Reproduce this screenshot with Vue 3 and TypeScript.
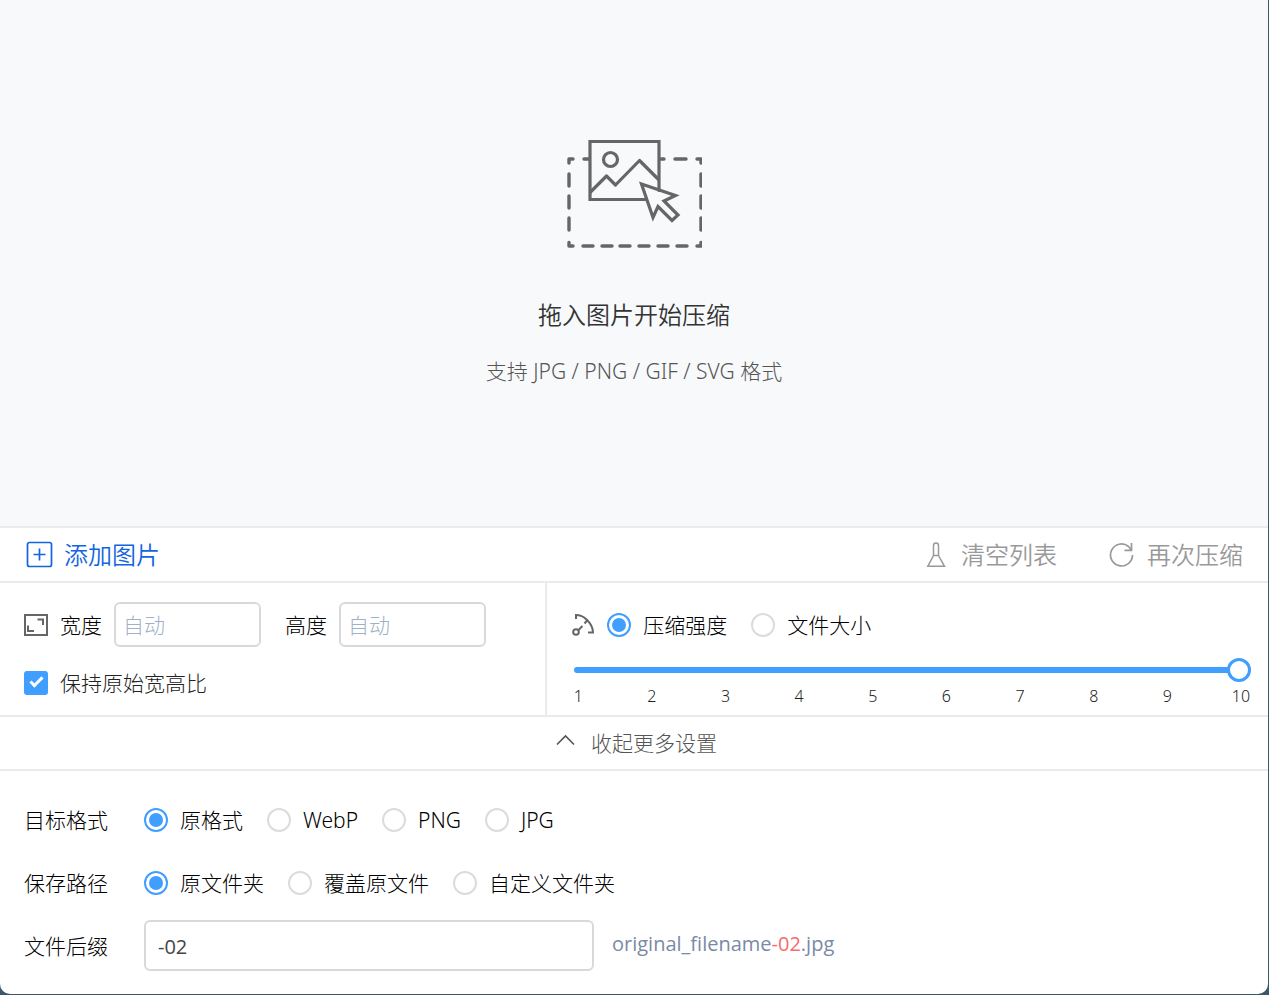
<script setup lang="ts">
import { computed, ref } from 'vue'

interface Option {
  value: string
  label: string
}

const width = ref('')
const height = ref('')
const keepRatio = ref(true)
const mode = ref('strength')
const strength = ref(10)
const expanded = ref(true)
const format = ref('original')
const folder = ref('original')
const suffix = ref('-02')

const modes: Option[] = [
  { value: 'strength', label: '压缩强度' },
  { value: 'size', label: '文件大小' },
]
const formats: Option[] = [
  { value: 'original', label: '原格式' },
  { value: 'webp', label: 'WebP' },
  { value: 'png', label: 'PNG' },
  { value: 'jpg', label: 'JPG' },
]
const folders: Option[] = [
  { value: 'original', label: '原文件夹' },
  { value: 'overwrite', label: '覆盖原文件' },
  { value: 'custom', label: '自定义文件夹' },
]

const ratio = computed(() => (strength.value - 1) / 9)
</script>

<template>
  <div class="window">
    <main class="drop">
      <svg class="drop-icon" viewBox="0 0 136 110" fill="none" stroke="#666" stroke-linecap="round" stroke-linejoin="round">
        <g stroke-width="3.4">
          <path d="M3 24V20H7M18 20H23M95 20H98M109 20H120M131 20H135V24" />
          <path d="M3 35V47M3 57V69M3 79V91M135 35V47M135 57V69M135 79V91" />
          <path d="M3 103.500V107H7M17 107H27M36 107H46M54 107H64M73 107H83M92 107H102M111 107H121M131 107H135V103.500" />
        </g>
        <g stroke-width="3.200">
          <path d="M79 60.500H24V2.500H93V51.500" stroke-linejoin="miter" />
          <circle cx="44.500" cy="20.500" r="7" />
          <path d="M24.500 53 40.500 37 49.500 46 73.500 21.500 92.500 40.500" />
          <path d="M75.500 45 109.500 56.500 98 62 112 76 106 81.500 92 67.500 87 78.500Z" stroke-linejoin="miter" />
        </g>
      </svg>
      <h1>拖入图片开始压缩</h1>
      <p>支持 JPG / PNG / GIF / SVG 格式</p>
    </main>

    <div class="toolbar">
      <button type="button" class="tool add">
        <svg class="add-icon" viewBox="0 0 27 27" fill="none" stroke="currentColor" stroke-width="1.700">
          <rect x="1.500" y="1.500" width="24" height="24" rx="2" />
          <path d="M13.500 7.500V19.500M7.500 13.500H19.500" />
        </svg>
        添加图片
      </button>
      <div class="tools">
        <button type="button" class="tool">
          <svg class="brush-icon" viewBox="0 0 20 26" fill="none" stroke="currentColor" stroke-width="1.500">
            <path d="M7.500 13.500V3.500Q7.500 1 10 1T12.500 3.500V13.500ZM7.500 13.500 1.800 24.300H18.500L12.500 13.500" />
          </svg>
          清空列表
        </button>
        <button type="button" class="tool">
          <svg class="again-icon" viewBox="0 0 26 26" fill="none" stroke="currentColor" stroke-width="1.700">
            <path d="M23.500 13A11 11 0 1 1 19.500 4.500L22 7.500M22.500 1V8.300H15.500" />
          </svg>
          再次压缩
        </button>
      </div>
    </div>

    <div class="settings">
      <section class="resize">
        <div class="sizes">
          <svg class="size-icon" viewBox="0 0 24 22" fill="none" stroke="#666" stroke-width="2">
            <rect x="1" y="1" width="22" height="20" />
            <path d="M13.500 5.500H19V11M4 11.500V17H10" />
          </svg>
          <label for="width">宽度</label>
          <input id="width" v-model="width" class="text size" type="text" placeholder="自动" />
          <label for="height" class="next">高度</label>
          <input id="height" v-model="height" class="text size" type="text" placeholder="自动" />
        </div>
        <label class="check">
          <input v-model="keepRatio" type="checkbox" />
          保持原始宽高比
        </label>
      </section>

      <section class="compress">
        <div class="modes">
          <svg class="gauge-icon" viewBox="0 0 23 24" fill="none" stroke="#666" stroke-width="2">
            <path d="M4 6V2Q10 2 14.500 6.500Q21 12.500 21 19.500H16M16 6.500 12.500 10.500M10.500 13 6.500 17" />
            <circle cx="4" cy="19" r="2.800" />
          </svg>
          <label v-for="item in modes" :key="item.value" class="choice">
            <input v-model="mode" type="radio" name="mode" :value="item.value" />
            {{ item.label }}
          </label>
        </div>
        <input
          v-model.number="strength"
          class="slider"
          type="range"
          min="1"
          max="10"
          aria-label="压缩强度"
          :style="{ '--ratio': ratio }"
        />
        <div class="scale">
          <span v-for="n in 10" :key="n">{{ n }}</span>
        </div>
      </section>
    </div>

    <button type="button" class="toggle" :aria-expanded="expanded" @click="expanded = !expanded">
      <svg class="chevron" :class="{ down: !expanded }" viewBox="0 0 24 24" fill="none" stroke="currentColor" stroke-width="1.600">
        <path d="M6 13.500 14.500 5 23 13.500" />
      </svg>
      收起更多设置
    </button>

    <section v-if="expanded" class="more">
      <div class="row" role="radiogroup" aria-label="目标格式">
        <span class="name">目标格式</span>
        <label v-for="item in formats" :key="item.value" class="choice">
          <input v-model="format" type="radio" name="format" :value="item.value" />
          {{ item.label }}
        </label>
      </div>
      <div class="row" role="radiogroup" aria-label="保存路径">
        <span class="name">保存路径</span>
        <label v-for="item in folders" :key="item.value" class="choice">
          <input v-model="folder" type="radio" name="folder" :value="item.value" />
          {{ item.label }}
        </label>
      </div>
      <div class="row">
        <label class="name" for="suffix">文件后缀</label>
        <input id="suffix" v-model="suffix" class="text suffix" type="text" />
        <span class="preview">original_filename<em>{{ suffix }}</em>.jpg</span>
      </div>
    </section>
  </div>
</template>

<style>
body {
  background: #3b586b;
}
</style>

<style scoped>
.window,
.window * {
  box-sizing: border-box;
}

.window {
  display: flex;
  flex-direction: column;
  min-height: calc(100vh - 1px);
  margin: 0 1px 1px 0;
  overflow: hidden;
  border-radius: 0 0 10px 10px;
  background: #fff;
  color: #000;
  font: 300 21px/32px "Noto Sans", "Noto Sans CJK SC", sans-serif;
}

button,
input {
  margin: 0;
  font: inherit;
}

button {
  padding: 0;
  border: 0;
  background: none;
  cursor: pointer;
}

svg {
  flex: none;
}

.drop {
  display: flex;
  flex: 1;
  flex-direction: column;
  align-items: center;
  justify-content: center;
  background: #f8f9fb;
}

.drop-icon {
  width: 136px;
  height: 110px;
}

h1 {
  margin: 48px 0 22px;
  color: #333;
  font-size: 24px;
  font-weight: 350;
  line-height: 36px;
}

p {
  margin: 0;
  color: #555;
}

.toolbar {
  display: flex;
  align-items: center;
  justify-content: space-between;
  height: 55px;
  padding: 0 25px 0 26px;
  border-top: 2px solid #ebebeb;
}

.tools {
  display: flex;
  gap: 52px;
}

.tool {
  display: flex;
  align-items: center;
  color: #999;
  font-size: 24px;
  font-weight: 350;
}

.tool.add {
  color: #1364e0;
}

.add-icon {
  width: 27px;
  height: 27px;
  margin-right: 11px;
}

.brush-icon {
  width: 20px;
  height: 26px;
  margin-right: 15px;
}

.again-icon {
  width: 26px;
  height: 26px;
  margin-right: 12px;
}

.settings {
  display: grid;
  grid-template-columns: 43fr 57fr;
  border-top: 2px solid #ebebeb;
  border-bottom: 2px solid #ebebeb;
}

.resize {
  padding: 19px 24px 16px;
}

.sizes {
  display: flex;
  align-items: center;
  gap: 12px;
  margin-bottom: 20px;
}

.size-icon {
  width: 24px;
  height: 22px;
}

.next {
  margin-left: 12px;
}

.text {
  min-width: 0;
  border: 2px solid #d9d9d9;
  border-radius: 6px;
  outline: none;
  background: #fff;
  color: #444;
}

.text::placeholder {
  color: #9fb0c8;
  opacity: 1;
}

.size {
  width: 147px;
  height: 45px;
  padding: 0 7px;
}

.check,
.choice {
  display: flex;
  align-items: center;
  gap: 12px;
}

.check {
  color: #222;
}

.check input {
  display: grid;
  place-items: center;
  width: 24px;
  height: 24px;
  border: 2px solid #d9d9d9;
  border-radius: 3px;
  appearance: none;
}

.check input:checked {
  border-color: #409eff;
  background: #409eff;
}

.check input:checked::before {
  width: 10px;
  height: 4px;
  margin-bottom: 5px;
  border: solid #fff;
  border-width: 0 0 3px 3px;
  content: "";
  transform: rotate(-45deg);
}

.choice {
  margin-right: 24px;
}

.choice input {
  display: grid;
  place-items: center;
  width: 24px;
  height: 24px;
  border: 2px solid #dcdcdc;
  border-radius: 50%;
  appearance: none;
}

.choice input:checked {
  border-color: #409eff;
}

.choice input:checked::before {
  width: 14px;
  height: 14px;
  border-radius: 50%;
  background: #409eff;
  content: "";
}

.compress {
  padding: 26px 17px 8px 25px;
  border-left: 2px solid #ebebeb;
}

.modes {
  display: flex;
  align-items: center;
}

.gauge-icon {
  width: 23px;
  height: 24px;
  margin-right: 12px;
}

.slider {
  --fill: calc(12px + (100% - 24px) * var(--ratio));
  display: block;
  width: calc(100% - 2px);
  height: 24px;
  margin: 17px 0 0 2px;
  appearance: none;
  background: none;
}

.slider::-webkit-slider-runnable-track {
  height: 6px;
  border-radius: 3px;
  background: linear-gradient(to right, #409eff var(--fill), #e4e7ed var(--fill));
}

.slider::-webkit-slider-thumb {
  width: 24px;
  height: 24px;
  margin-top: -9px;
  border: 3px solid #409eff;
  border-radius: 50%;
  appearance: none;
  background: #fff;
}

.scale {
  display: flex;
  justify-content: space-between;
  margin: 3px 0 0 -4px;
  color: #222;
  font-size: 16px;
  line-height: 22px;
}

.scale span {
  width: 20px;
  text-align: center;
}

.toggle {
  display: flex;
  align-items: center;
  justify-content: center;
  gap: 16px;
  height: 52px;
  color: #555;
}

.chevron {
  width: 24px;
  height: 24px;
}

.chevron.down {
  transform: rotate(180deg);
}

.more {
  display: grid;
  gap: 12px;
  padding: 23px 24px;
  border-top: 2px solid #ebebeb;
}

.row {
  display: flex;
  align-items: center;
  height: 51px;
}

.name {
  flex: none;
  margin-right: 36px;
}

.suffix {
  flex: 0 1 450px;
  height: 51px;
  padding: 2px 12px 0;
  font-family: "Open Sans", "Noto Sans CJK SC", sans-serif;
  font-size: 20px;
  font-weight: 400;
}

.preview {
  margin-left: 18px;
  padding-bottom: 4px;
  color: #7a8aa6;
  font-family: "Open Sans", "Noto Sans CJK SC", sans-serif;
  font-size: 20px;
  font-weight: 400;
}

.preview em {
  color: #f56c6c;
  font-style: normal;
}
</style>
